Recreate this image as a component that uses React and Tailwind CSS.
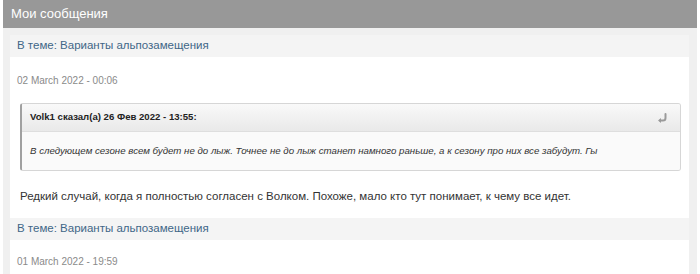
import React from "react";

function ReplyIcon() {
  return (
    <svg width="11" height="10" viewBox="0 0 11 10" className="block">
      <path d="M8.5 1 V5 Q8.5 7.5 6 7.5 H3" fill="none" stroke="#9a9a9a" strokeWidth="2" strokeLinecap="round" />
      <path d="M1 7.5 L4 5 L4 10 Z" fill="#9a9a9a" />
    </svg>
  );
}

function Topic() {
  return (
    <div className="h-[22px] bg-[#f4f4f4] pl-[7px] flex items-center text-[11.5px] text-[#3f6687]">
      В теме: Варианты альпозамещения
    </div>
  );
}

export default function App() {
  return (
    <div className="w-[700px] h-[274px] overflow-hidden bg-white font-['Liberation_Sans',Arial,sans-serif]">
      <div className="mx-[3px]">
        <div className="h-[28px] bg-[#989898] pl-[8px] flex items-center text-white text-[13px]">
          Мои сообщения
        </div>
        <div className="bg-[#f0f0f0] pt-[7px] pl-[7px] pr-[8px] pb-[40px]">
          <div className="bg-white">
            <Topic />
            <div className="pt-[17px] pl-[7px] text-[10px] leading-[14px] text-[#8a8a8a]">
              02 March 2022 - 00:06
            </div>
            <div className="mt-[15px] ml-[10px] mr-[8px] border border-[#d6d6d6] border-l-2 border-l-[#a0a0a0] rounded-[3px] overflow-hidden">
              <div className="h-[28px] bg-gradient-to-b from-[#f9f9f9] to-[#e9e9e9] border-b border-[#dedede] pl-[8px] pr-[12px] flex items-center justify-between">
                <span className="text-[9.6px] font-bold text-[#222]">Volk1 сказал(а) 26 Фев 2022 - 13:55:</span>
                <ReplyIcon />
              </div>
              <div className="h-[38px] bg-[#fafafa] pl-[8px] pt-[12px] text-[9.7px] italic leading-[14px] text-[#333]">
                В следующем сезоне всем будет не до лыж. Точнее не до лыж станет намного раньше, а к сезону про них все забудут. Гы
              </div>
            </div>
            <div className="pt-[17px] pb-[14px] pl-[10px] text-[11.5px] leading-[16px] text-[#333]">
              Редкий случай, когда я полностью согласен с Волком. Похоже, мало кто тут понимает, к чему все идет.
            </div>
            <Topic />
            <div className="pt-[15px] pl-[7px] pb-[20px] text-[10px] leading-[14px] text-[#8a8a8a]">
              01 March 2022 - 19:59
            </div>
          </div>
        </div>
      </div>
    </div>
  );
}
